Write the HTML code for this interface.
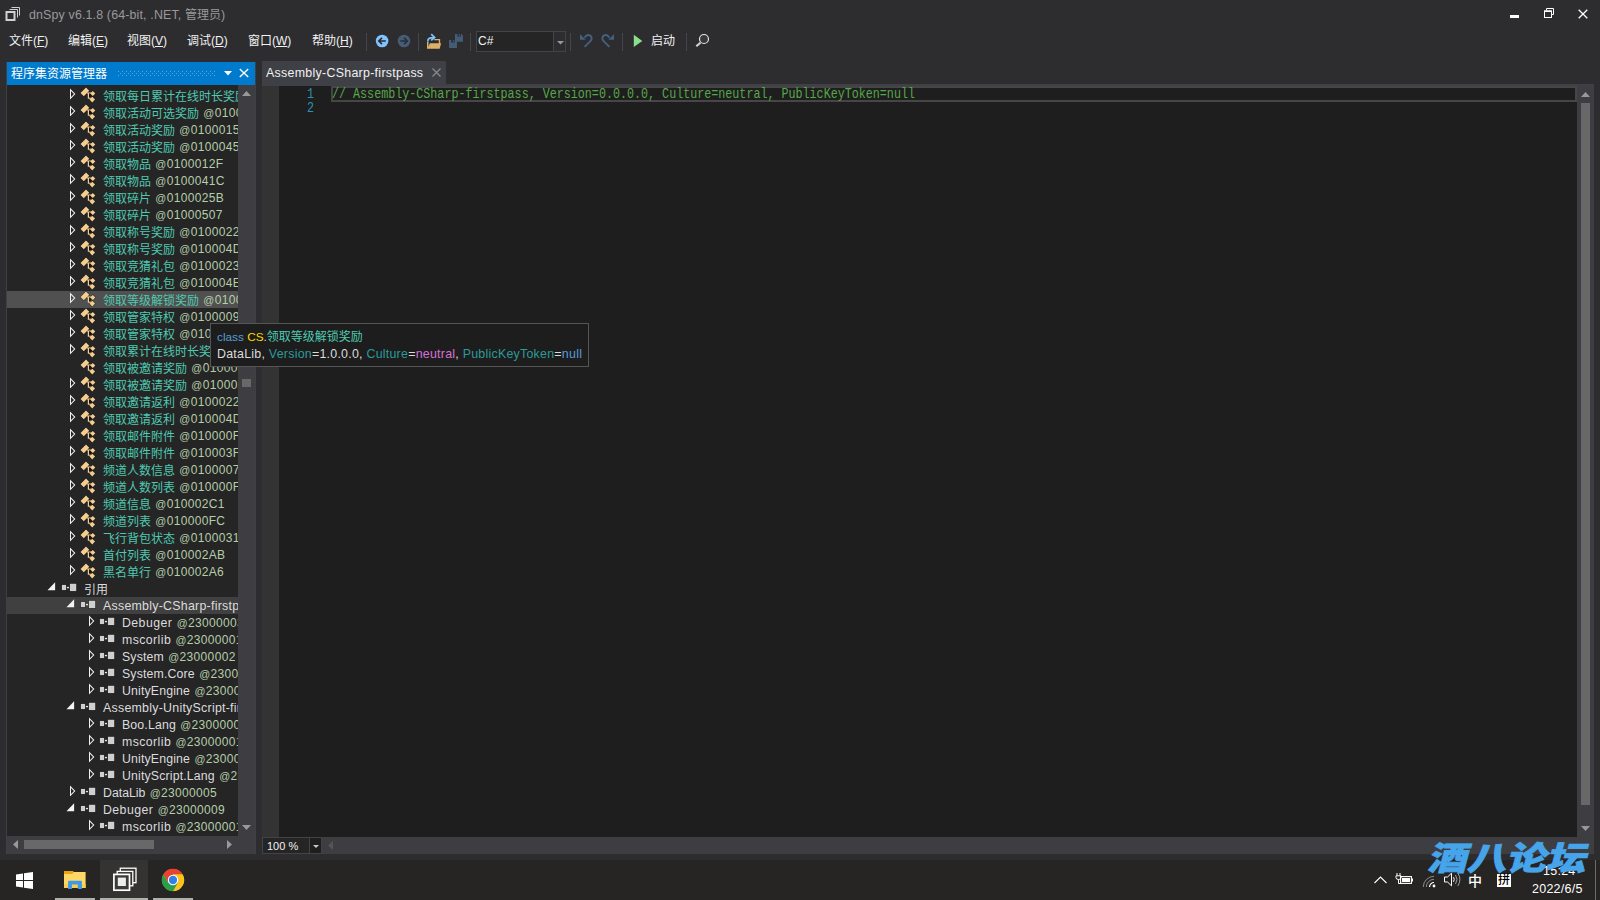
<!DOCTYPE html>
<html lang="zh-CN">
<head>
<meta charset="utf-8">
<title>dnSpy v6.1.8 (64-bit, .NET, 管理员)</title>
<style>
*{box-sizing:border-box;margin:0;padding:0}
html,body{width:1600px;height:900px;overflow:hidden;background:#2d2d30}
body{position:relative;font-family:"Liberation Sans","Noto Sans CJK SC",sans-serif;font-size:12px;color:#f1f1f1;-webkit-font-smoothing:antialiased}
.abs{position:absolute}
svg{position:absolute;overflow:visible}
/* title */
#title{position:absolute;left:29px;top:7px;height:16px;line-height:16px;color:#999;font-size:12px;white-space:nowrap}
/* menu */
.menu{position:absolute;top:33px;height:16px;line-height:16px;white-space:nowrap;color:#f1f1f1}
.menu u{text-decoration:underline;text-underline-offset:1px}
.sep{position:absolute;top:33px;width:1px;height:18px;background:#46464a}
/* panel */
#panel{position:absolute;left:6px;top:62px;width:250px;height:792px;background:#252526;border:1px solid #3f3f46;border-top:none}
#phead{position:absolute;left:7px;top:62px;width:248px;height:23px;background:#007acc}
#phead .t{position:absolute;left:4px;top:4px;line-height:16px;color:#fff;white-space:nowrap}
#tree{position:absolute;left:7px;top:86px;width:231px;height:750px;overflow:hidden;background:#252526}
.row{position:absolute;left:0;width:231px;height:17px;white-space:nowrap}
.row.sel{background:#404040}.row.hot{background:#505050}
.row .ex{top:2px}
.row .ic{top:0}
.lbl{position:absolute;top:1px;height:17px;line-height:17px;white-space:nowrap}
.l{font-size:12.4px;letter-spacing:.25px}.c{font-size:12px;letter-spacing:0}
.ty{color:#4ec9b0;position:relative;top:1px}.cj{position:relative;top:1px}.tx{color:#dcdcdc}.tk{color:#b5cea8;margin-left:1px;letter-spacing:.33px}.at{font-size:10.8px}.n{font-size:12.3px;letter-spacing:.16px}
.sb{background:#3e3e42;position:absolute}
.th{background:#686868;position:absolute}
/* tab */
#tab{position:absolute;left:262px;top:61px;width:184px;height:23px;background:#3f3f46}
#tab .t{position:absolute;left:4px;top:4px;line-height:16px;color:#f1f1f1;white-space:nowrap}
#tabline{position:absolute;left:262px;top:84px;width:1332px;height:2px;background:#3f3f46}
#editor{position:absolute;left:262px;top:86px;width:1315px;height:751px;background:#1e1e1e}
#gutter{position:absolute;left:262px;top:86px;width:17px;height:751px;background:#333334}
.code{font-family:"Liberation Mono",monospace;font-size:14px;white-space:pre;position:absolute;transform-origin:0 0;transform:scaleX(.836)}
#curline{position:absolute;left:331px;top:86px;width:1246px;height:16px;border:2px solid #464646}
/* bottom */
#ebottom{position:absolute;left:262px;top:837px;width:1332px;height:17px;background:#3e3e42}
#zoom{position:absolute;left:262px;top:837px;width:60px;height:17px;border:1px solid #434346;background:#252526}
/* tooltip */
#tip{position:absolute;left:210px;top:323px;width:379px;height:44px;background:#1d1d1d;border:1px solid #555}
#tip div{position:absolute;left:6px;white-space:nowrap;line-height:17px;height:17px;color:#dcdcdc}
/* taskbar */
#taskbar{position:absolute;left:0;top:860px;width:1600px;height:40px;background:#262524}
.ul{position:absolute;top:38px;height:2px;background:#b0b0ac}
#wm{position:absolute;left:1425px;top:834px;white-space:nowrap;font-family:"Liberation Sans","Noto Sans CJK SC",sans-serif;font-weight:900;font-size:38px;line-height:44px;color:#46a5ea;-webkit-text-stroke:0.9px #46a5ea;transform-origin:0 100%;transform:skewX(-15deg) scale(1.04,0.86);letter-spacing:0}
.tray{position:absolute;color:#fff;white-space:nowrap}
</style>
</head>
<body>


<!-- title bar -->
<svg style="left:5px;top:7px" width="15" height="14" viewBox="0 0 15 14"><path d="M4.5 2.5 H12.5 V10.5 M6.5 0.5 H14.5 V8.5" fill="none" stroke="#d0d0d0" stroke-width="1"/><rect x="1.5" y="5" width="8" height="8" fill="none" stroke="#d0d0d0" stroke-width="2"/></svg>
<div id="title"><span class="l" style="letter-spacing:.16px">dnSpy v6.1.8 (64-bit, .NET, </span>管理员<span class="l">)</span></div>
<svg style="left:1510px;top:15px" width="9" height="3"><rect width="9" height="3" fill="#fff"/></svg>
<svg style="left:1544px;top:8px" width="10" height="10" viewBox="0 0 10 10"><path d="M2.5 2.5 V0.5 H9.5 V6.5 H7.5" fill="none" stroke="#fff" stroke-width="1"/><rect x="0.5" y="3" width="7" height="6.5" fill="none" stroke="#fff" stroke-width="1"/><rect x="0" y="2.5" width="8" height="1.5" fill="#fff"/></svg>
<svg style="left:1578px;top:9px" width="10" height="10" viewBox="0 0 10 10"><path d="M0.7 0.7 L9.3 9.3 M9.3 0.7 L0.7 9.3" stroke="#fff" stroke-width="1.3" fill="none"/></svg>

<!-- menu -->
<div class="menu" style="left:9px">文件(<u>F</u>)</div>
<div class="menu" style="left:68px">编辑(<u>E</u>)</div>
<div class="menu" style="left:127px">视图(<u>V</u>)</div>
<div class="menu" style="left:187px">调试(<u>D</u>)</div>
<div class="menu" style="left:248px">窗口(<u>W</u>)</div>
<div class="menu" style="left:312px">帮助(<u>H</u>)</div>
<div class="sep" style="left:366px"></div>
<!-- toolbar icons (absolute coords) -->
<svg style="left:0;top:0" width="720" height="56" viewBox="0 0 720 56">
<!-- back -->
<circle cx="382.1" cy="41" r="6.3" fill="#7fc3ff"/>
<path d="M385.8 41 H380 M382 37.9 L378.8 41 L382 44.1" stroke="#2b2b30" stroke-width="1.6" fill="none"/>
<!-- forward -->
<circle cx="404" cy="41" r="6.3" fill="#455c76"/>
<path d="M400.3 41 H406.1 M404.1 37.9 L407.3 41 L404.1 44.1" stroke="#2d2d30" stroke-width="1.6" fill="none"/>
<!-- open -->
<path d="M427 42 H428.5 V47 L429.8 43.2 H438.8 V40.3 H434.3 V39 H440.15 V43.2 H441.1 L439.7 48.7 H427 Z" fill="#dbb068"/>
<path d="M427.9 41.6 C427.6 38.6 429 37.6 434.2 37.6" stroke="#7fc3ff" stroke-width="1.7" fill="none"/>
<path d="M431.2 34.2 L434.6 37.4 L431.2 40.4" stroke="#7fc3ff" stroke-width="1.7" fill="none"/>
<!-- save all -->
<path d="M455 34.05 H461.6 L462.95 35.4 V41.7 H455 Z M457.4 34.05 V36.45 H461 V34.05 Z" fill="#455c76" fill-rule="evenodd"/>
<rect x="458.75" y="34.05" width="1.35" height="1.65" fill="#455c76"/>
<path d="M449 40.05 H456.95 V48 H449 Z M451.25 40.05 V42.45 H454.85 V40.05 Z" fill="#455c76" fill-rule="evenodd"/>
<rect x="453.05" y="40.05" width="1.1" height="1.65" fill="#455c76"/>
<!-- undo -->
<path d="M584.6 46.9 L590.6 40.9 A3.4 3.4 0 1 0 584.9 37.8" stroke="#45607f" stroke-width="2" fill="none"/>
<path d="M580 34.2 V39.8 H585.8 Z" fill="#45607f"/>
<!-- redo -->
<path d="M609.4 46.9 L603.4 40.9 A3.4 3.4 0 1 1 609.1 37.8" stroke="#45607f" stroke-width="2" fill="none"/>
<path d="M614 34.2 V39.8 H608.2 Z" fill="#45607f"/>
<!-- start -->
<path d="M633.8 34.8 L642.3 40.95 L633.8 47.1 Z" fill="#88e08a"/>
<!-- search -->
<circle cx="704" cy="39" r="4.5" fill="#38383c" stroke="#e4e4e4" stroke-width="1.2"/>
<path d="M700.4 42.7 L696.3 46.2" stroke="#d4d4d4" stroke-width="2.1"/>
</svg>
<div class="sep" style="left:418px"></div>
<div class="sep" style="left:470px"></div>
<!-- combobox -->
<div class="abs" style="left:476px;top:31px;width:90px;height:21px;border:1px solid #434346;background:#252526"></div>
<div class="abs" style="left:553px;top:32px;width:12px;height:19px;background:#2d2d30;border-left:1px solid #434346"></div>
<div class="abs" style="left:478px;top:33px;line-height:16px">C#</div>
<svg style="left:557px;top:41px" width="7" height="4" viewBox="0 0 7 4"><path d="M0 0 H7 L3.5 3.5 Z" fill="#999"/></svg>
<div class="sep" style="left:570px"></div>
<div class="sep" style="left:622px"></div>
<div class="menu" style="left:651px">启动</div>
<div class="sep" style="left:686px"></div>

<!-- left panel -->
<div id="panel"></div>
<div id="phead"><span class="t">程序集资源管理器</span>
<svg style="left:111px;top:9px" width="98" height="5"><path d="M0 .5H98M0 4.5H98" stroke="#59a8de" stroke-width="1" stroke-dasharray="1 3"/><path d="M2 2.5H98" stroke="#59a8de" stroke-width="1" stroke-dasharray="1 3"/></svg>
<svg style="left:217px;top:9px" width="8" height="5" viewBox="0 0 8 5"><path d="M0 0 H8 L4 4.5 Z" fill="#fff"/></svg>
<svg style="left:232px;top:6px" width="10" height="10" viewBox="0 0 10 10"><path d="M0.8 1 L9.2 9 M9.2 1 L0.8 9" stroke="#fff" stroke-width="1.4" fill="none"/></svg>
</div>
<div id="tree">
<div class="row" style="top:1px"><svg class="ex" style="left:62px;top:0" width="8" height="14" viewBox="0 0 8 14"><path d="M1 1.6 L1 12.4 L6.4 7 Z M2 4 L2 10 L5 7 Z" fill="#f1f1f1" fill-rule="evenodd"/></svg><svg class="ic" style="left:73px" width="17" height="17" viewBox="0 0 17 17"><path d="M6 -0.2 L-0.2 6 L3.75 9.95 L9.95 3.75 Z M12.75 3.2 L16.05 6.5 L12.75 9.8 L9.45 6.5 Z M12.25 9.2 L15.65 12.6 L12.25 16 L8.85 12.6 Z" fill="#111" opacity=".55"/><path d="M6 0.5 L0.5 6 L3.75 9.25 L9.25 3.75 Z" fill="#f5cd90"/><path d="M12.75 3.9 L15.35 6.5 L12.75 9.1 L10.15 6.5 Z" fill="#f5cd90"/><path d="M12.25 9.8 L15.05 12.6 L12.25 15.4 L9.45 12.6 Z" fill="#f5cd90"/><path d="M7 5.4 H11.5 V6.6 H9 V10.6 H10.8 V11.8 H7.8 V6.6 H7 Z" fill="#f5cd90"/><path d="M9 6.6 H10.1 L11.4 8.2 L10.7 10.6 H9 Z" fill="#0c0c0c" opacity=".7"/></svg><span class="lbl" style="left:96px"><span class="ty">领取每日累计在线时长奖励</span> <span class="tk"><span class="at">@</span>010002E0</span></span></div>
<div class="row" style="top:18px"><svg class="ex" style="left:62px;top:0" width="8" height="14" viewBox="0 0 8 14"><path d="M1 1.6 L1 12.4 L6.4 7 Z M2 4 L2 10 L5 7 Z" fill="#f1f1f1" fill-rule="evenodd"/></svg><svg class="ic" style="left:73px" width="17" height="17" viewBox="0 0 17 17"><path d="M6 -0.2 L-0.2 6 L3.75 9.95 L9.95 3.75 Z M12.75 3.2 L16.05 6.5 L12.75 9.8 L9.45 6.5 Z M12.25 9.2 L15.65 12.6 L12.25 16 L8.85 12.6 Z" fill="#111" opacity=".55"/><path d="M6 0.5 L0.5 6 L3.75 9.25 L9.25 3.75 Z" fill="#f5cd90"/><path d="M12.75 3.9 L15.35 6.5 L12.75 9.1 L10.15 6.5 Z" fill="#f5cd90"/><path d="M12.25 9.8 L15.05 12.6 L12.25 15.4 L9.45 12.6 Z" fill="#f5cd90"/><path d="M7 5.4 H11.5 V6.6 H9 V10.6 H10.8 V11.8 H7.8 V6.6 H7 Z" fill="#f5cd90"/><path d="M9 6.6 H10.1 L11.4 8.2 L10.7 10.6 H9 Z" fill="#0c0c0c" opacity=".7"/></svg><span class="lbl" style="left:96px"><span class="ty">领取活动可选奖励</span> <span class="tk"><span class="at">@</span>01000459</span></span></div>
<div class="row" style="top:35px"><svg class="ex" style="left:62px;top:0" width="8" height="14" viewBox="0 0 8 14"><path d="M1 1.6 L1 12.4 L6.4 7 Z M2 4 L2 10 L5 7 Z" fill="#f1f1f1" fill-rule="evenodd"/></svg><svg class="ic" style="left:73px" width="17" height="17" viewBox="0 0 17 17"><path d="M6 -0.2 L-0.2 6 L3.75 9.95 L9.95 3.75 Z M12.75 3.2 L16.05 6.5 L12.75 9.8 L9.45 6.5 Z M12.25 9.2 L15.65 12.6 L12.25 16 L8.85 12.6 Z" fill="#111" opacity=".55"/><path d="M6 0.5 L0.5 6 L3.75 9.25 L9.25 3.75 Z" fill="#f5cd90"/><path d="M12.75 3.9 L15.35 6.5 L12.75 9.1 L10.15 6.5 Z" fill="#f5cd90"/><path d="M12.25 9.8 L15.05 12.6 L12.25 15.4 L9.45 12.6 Z" fill="#f5cd90"/><path d="M7 5.4 H11.5 V6.6 H9 V10.6 H10.8 V11.8 H7.8 V6.6 H7 Z" fill="#f5cd90"/><path d="M9 6.6 H10.1 L11.4 8.2 L10.7 10.6 H9 Z" fill="#0c0c0c" opacity=".7"/></svg><span class="lbl" style="left:96px"><span class="ty">领取活动奖励</span> <span class="tk"><span class="at">@</span>01000157</span></span></div>
<div class="row" style="top:52px"><svg class="ex" style="left:62px;top:0" width="8" height="14" viewBox="0 0 8 14"><path d="M1 1.6 L1 12.4 L6.4 7 Z M2 4 L2 10 L5 7 Z" fill="#f1f1f1" fill-rule="evenodd"/></svg><svg class="ic" style="left:73px" width="17" height="17" viewBox="0 0 17 17"><path d="M6 -0.2 L-0.2 6 L3.75 9.95 L9.95 3.75 Z M12.75 3.2 L16.05 6.5 L12.75 9.8 L9.45 6.5 Z M12.25 9.2 L15.65 12.6 L12.25 16 L8.85 12.6 Z" fill="#111" opacity=".55"/><path d="M6 0.5 L0.5 6 L3.75 9.25 L9.25 3.75 Z" fill="#f5cd90"/><path d="M12.75 3.9 L15.35 6.5 L12.75 9.1 L10.15 6.5 Z" fill="#f5cd90"/><path d="M12.25 9.8 L15.05 12.6 L12.25 15.4 L9.45 12.6 Z" fill="#f5cd90"/><path d="M7 5.4 H11.5 V6.6 H9 V10.6 H10.8 V11.8 H7.8 V6.6 H7 Z" fill="#f5cd90"/><path d="M9 6.6 H10.1 L11.4 8.2 L10.7 10.6 H9 Z" fill="#0c0c0c" opacity=".7"/></svg><span class="lbl" style="left:96px"><span class="ty">领取活动奖励</span> <span class="tk"><span class="at">@</span>01000458</span></span></div>
<div class="row" style="top:69px"><svg class="ex" style="left:62px;top:0" width="8" height="14" viewBox="0 0 8 14"><path d="M1 1.6 L1 12.4 L6.4 7 Z M2 4 L2 10 L5 7 Z" fill="#f1f1f1" fill-rule="evenodd"/></svg><svg class="ic" style="left:73px" width="17" height="17" viewBox="0 0 17 17"><path d="M6 -0.2 L-0.2 6 L3.75 9.95 L9.95 3.75 Z M12.75 3.2 L16.05 6.5 L12.75 9.8 L9.45 6.5 Z M12.25 9.2 L15.65 12.6 L12.25 16 L8.85 12.6 Z" fill="#111" opacity=".55"/><path d="M6 0.5 L0.5 6 L3.75 9.25 L9.25 3.75 Z" fill="#f5cd90"/><path d="M12.75 3.9 L15.35 6.5 L12.75 9.1 L10.15 6.5 Z" fill="#f5cd90"/><path d="M12.25 9.8 L15.05 12.6 L12.25 15.4 L9.45 12.6 Z" fill="#f5cd90"/><path d="M7 5.4 H11.5 V6.6 H9 V10.6 H10.8 V11.8 H7.8 V6.6 H7 Z" fill="#f5cd90"/><path d="M9 6.6 H10.1 L11.4 8.2 L10.7 10.6 H9 Z" fill="#0c0c0c" opacity=".7"/></svg><span class="lbl" style="left:96px"><span class="ty">领取物品</span> <span class="tk"><span class="at">@</span>0100012F</span></span></div>
<div class="row" style="top:86px"><svg class="ex" style="left:62px;top:0" width="8" height="14" viewBox="0 0 8 14"><path d="M1 1.6 L1 12.4 L6.4 7 Z M2 4 L2 10 L5 7 Z" fill="#f1f1f1" fill-rule="evenodd"/></svg><svg class="ic" style="left:73px" width="17" height="17" viewBox="0 0 17 17"><path d="M6 -0.2 L-0.2 6 L3.75 9.95 L9.95 3.75 Z M12.75 3.2 L16.05 6.5 L12.75 9.8 L9.45 6.5 Z M12.25 9.2 L15.65 12.6 L12.25 16 L8.85 12.6 Z" fill="#111" opacity=".55"/><path d="M6 0.5 L0.5 6 L3.75 9.25 L9.25 3.75 Z" fill="#f5cd90"/><path d="M12.75 3.9 L15.35 6.5 L12.75 9.1 L10.15 6.5 Z" fill="#f5cd90"/><path d="M12.25 9.8 L15.05 12.6 L12.25 15.4 L9.45 12.6 Z" fill="#f5cd90"/><path d="M7 5.4 H11.5 V6.6 H9 V10.6 H10.8 V11.8 H7.8 V6.6 H7 Z" fill="#f5cd90"/><path d="M9 6.6 H10.1 L11.4 8.2 L10.7 10.6 H9 Z" fill="#0c0c0c" opacity=".7"/></svg><span class="lbl" style="left:96px"><span class="ty">领取物品</span> <span class="tk"><span class="at">@</span>0100041C</span></span></div>
<div class="row" style="top:103px"><svg class="ex" style="left:62px;top:0" width="8" height="14" viewBox="0 0 8 14"><path d="M1 1.6 L1 12.4 L6.4 7 Z M2 4 L2 10 L5 7 Z" fill="#f1f1f1" fill-rule="evenodd"/></svg><svg class="ic" style="left:73px" width="17" height="17" viewBox="0 0 17 17"><path d="M6 -0.2 L-0.2 6 L3.75 9.95 L9.95 3.75 Z M12.75 3.2 L16.05 6.5 L12.75 9.8 L9.45 6.5 Z M12.25 9.2 L15.65 12.6 L12.25 16 L8.85 12.6 Z" fill="#111" opacity=".55"/><path d="M6 0.5 L0.5 6 L3.75 9.25 L9.25 3.75 Z" fill="#f5cd90"/><path d="M12.75 3.9 L15.35 6.5 L12.75 9.1 L10.15 6.5 Z" fill="#f5cd90"/><path d="M12.25 9.8 L15.05 12.6 L12.25 15.4 L9.45 12.6 Z" fill="#f5cd90"/><path d="M7 5.4 H11.5 V6.6 H9 V10.6 H10.8 V11.8 H7.8 V6.6 H7 Z" fill="#f5cd90"/><path d="M9 6.6 H10.1 L11.4 8.2 L10.7 10.6 H9 Z" fill="#0c0c0c" opacity=".7"/></svg><span class="lbl" style="left:96px"><span class="ty">领取碎片</span> <span class="tk"><span class="at">@</span>0100025B</span></span></div>
<div class="row" style="top:120px"><svg class="ex" style="left:62px;top:0" width="8" height="14" viewBox="0 0 8 14"><path d="M1 1.6 L1 12.4 L6.4 7 Z M2 4 L2 10 L5 7 Z" fill="#f1f1f1" fill-rule="evenodd"/></svg><svg class="ic" style="left:73px" width="17" height="17" viewBox="0 0 17 17"><path d="M6 -0.2 L-0.2 6 L3.75 9.95 L9.95 3.75 Z M12.75 3.2 L16.05 6.5 L12.75 9.8 L9.45 6.5 Z M12.25 9.2 L15.65 12.6 L12.25 16 L8.85 12.6 Z" fill="#111" opacity=".55"/><path d="M6 0.5 L0.5 6 L3.75 9.25 L9.25 3.75 Z" fill="#f5cd90"/><path d="M12.75 3.9 L15.35 6.5 L12.75 9.1 L10.15 6.5 Z" fill="#f5cd90"/><path d="M12.25 9.8 L15.05 12.6 L12.25 15.4 L9.45 12.6 Z" fill="#f5cd90"/><path d="M7 5.4 H11.5 V6.6 H9 V10.6 H10.8 V11.8 H7.8 V6.6 H7 Z" fill="#f5cd90"/><path d="M9 6.6 H10.1 L11.4 8.2 L10.7 10.6 H9 Z" fill="#0c0c0c" opacity=".7"/></svg><span class="lbl" style="left:96px"><span class="ty">领取碎片</span> <span class="tk"><span class="at">@</span>01000507</span></span></div>
<div class="row" style="top:137px"><svg class="ex" style="left:62px;top:0" width="8" height="14" viewBox="0 0 8 14"><path d="M1 1.6 L1 12.4 L6.4 7 Z M2 4 L2 10 L5 7 Z" fill="#f1f1f1" fill-rule="evenodd"/></svg><svg class="ic" style="left:73px" width="17" height="17" viewBox="0 0 17 17"><path d="M6 -0.2 L-0.2 6 L3.75 9.95 L9.95 3.75 Z M12.75 3.2 L16.05 6.5 L12.75 9.8 L9.45 6.5 Z M12.25 9.2 L15.65 12.6 L12.25 16 L8.85 12.6 Z" fill="#111" opacity=".55"/><path d="M6 0.5 L0.5 6 L3.75 9.25 L9.25 3.75 Z" fill="#f5cd90"/><path d="M12.75 3.9 L15.35 6.5 L12.75 9.1 L10.15 6.5 Z" fill="#f5cd90"/><path d="M12.25 9.8 L15.05 12.6 L12.25 15.4 L9.45 12.6 Z" fill="#f5cd90"/><path d="M7 5.4 H11.5 V6.6 H9 V10.6 H10.8 V11.8 H7.8 V6.6 H7 Z" fill="#f5cd90"/><path d="M9 6.6 H10.1 L11.4 8.2 L10.7 10.6 H9 Z" fill="#0c0c0c" opacity=".7"/></svg><span class="lbl" style="left:96px"><span class="ty">领取称号奖励</span> <span class="tk"><span class="at">@</span>01000228</span></span></div>
<div class="row" style="top:154px"><svg class="ex" style="left:62px;top:0" width="8" height="14" viewBox="0 0 8 14"><path d="M1 1.6 L1 12.4 L6.4 7 Z M2 4 L2 10 L5 7 Z" fill="#f1f1f1" fill-rule="evenodd"/></svg><svg class="ic" style="left:73px" width="17" height="17" viewBox="0 0 17 17"><path d="M6 -0.2 L-0.2 6 L3.75 9.95 L9.95 3.75 Z M12.75 3.2 L16.05 6.5 L12.75 9.8 L9.45 6.5 Z M12.25 9.2 L15.65 12.6 L12.25 16 L8.85 12.6 Z" fill="#111" opacity=".55"/><path d="M6 0.5 L0.5 6 L3.75 9.25 L9.25 3.75 Z" fill="#f5cd90"/><path d="M12.75 3.9 L15.35 6.5 L12.75 9.1 L10.15 6.5 Z" fill="#f5cd90"/><path d="M12.25 9.8 L15.05 12.6 L12.25 15.4 L9.45 12.6 Z" fill="#f5cd90"/><path d="M7 5.4 H11.5 V6.6 H9 V10.6 H10.8 V11.8 H7.8 V6.6 H7 Z" fill="#f5cd90"/><path d="M9 6.6 H10.1 L11.4 8.2 L10.7 10.6 H9 Z" fill="#0c0c0c" opacity=".7"/></svg><span class="lbl" style="left:96px"><span class="ty">领取称号奖励</span> <span class="tk"><span class="at">@</span>010004D2</span></span></div>
<div class="row" style="top:171px"><svg class="ex" style="left:62px;top:0" width="8" height="14" viewBox="0 0 8 14"><path d="M1 1.6 L1 12.4 L6.4 7 Z M2 4 L2 10 L5 7 Z" fill="#f1f1f1" fill-rule="evenodd"/></svg><svg class="ic" style="left:73px" width="17" height="17" viewBox="0 0 17 17"><path d="M6 -0.2 L-0.2 6 L3.75 9.95 L9.95 3.75 Z M12.75 3.2 L16.05 6.5 L12.75 9.8 L9.45 6.5 Z M12.25 9.2 L15.65 12.6 L12.25 16 L8.85 12.6 Z" fill="#111" opacity=".55"/><path d="M6 0.5 L0.5 6 L3.75 9.25 L9.25 3.75 Z" fill="#f5cd90"/><path d="M12.75 3.9 L15.35 6.5 L12.75 9.1 L10.15 6.5 Z" fill="#f5cd90"/><path d="M12.25 9.8 L15.05 12.6 L12.25 15.4 L9.45 12.6 Z" fill="#f5cd90"/><path d="M7 5.4 H11.5 V6.6 H9 V10.6 H10.8 V11.8 H7.8 V6.6 H7 Z" fill="#f5cd90"/><path d="M9 6.6 H10.1 L11.4 8.2 L10.7 10.6 H9 Z" fill="#0c0c0c" opacity=".7"/></svg><span class="lbl" style="left:96px"><span class="ty">领取竞猜礼包</span> <span class="tk"><span class="at">@</span>01000235</span></span></div>
<div class="row" style="top:188px"><svg class="ex" style="left:62px;top:0" width="8" height="14" viewBox="0 0 8 14"><path d="M1 1.6 L1 12.4 L6.4 7 Z M2 4 L2 10 L5 7 Z" fill="#f1f1f1" fill-rule="evenodd"/></svg><svg class="ic" style="left:73px" width="17" height="17" viewBox="0 0 17 17"><path d="M6 -0.2 L-0.2 6 L3.75 9.95 L9.95 3.75 Z M12.75 3.2 L16.05 6.5 L12.75 9.8 L9.45 6.5 Z M12.25 9.2 L15.65 12.6 L12.25 16 L8.85 12.6 Z" fill="#111" opacity=".55"/><path d="M6 0.5 L0.5 6 L3.75 9.25 L9.25 3.75 Z" fill="#f5cd90"/><path d="M12.75 3.9 L15.35 6.5 L12.75 9.1 L10.15 6.5 Z" fill="#f5cd90"/><path d="M12.25 9.8 L15.05 12.6 L12.25 15.4 L9.45 12.6 Z" fill="#f5cd90"/><path d="M7 5.4 H11.5 V6.6 H9 V10.6 H10.8 V11.8 H7.8 V6.6 H7 Z" fill="#f5cd90"/><path d="M9 6.6 H10.1 L11.4 8.2 L10.7 10.6 H9 Z" fill="#0c0c0c" opacity=".7"/></svg><span class="lbl" style="left:96px"><span class="ty">领取竞猜礼包</span> <span class="tk"><span class="at">@</span>010004E1</span></span></div>
<div class="row hot" style="top:205px"><svg class="ex" style="left:62px;top:0" width="8" height="14" viewBox="0 0 8 14"><path d="M1 1.6 L1 12.4 L6.4 7 Z M2 4 L2 10 L5 7 Z" fill="#f1f1f1" fill-rule="evenodd"/></svg><svg class="ic" style="left:73px" width="17" height="17" viewBox="0 0 17 17"><path d="M6 -0.2 L-0.2 6 L3.75 9.95 L9.95 3.75 Z M12.75 3.2 L16.05 6.5 L12.75 9.8 L9.45 6.5 Z M12.25 9.2 L15.65 12.6 L12.25 16 L8.85 12.6 Z" fill="#111" opacity=".55"/><path d="M6 0.5 L0.5 6 L3.75 9.25 L9.25 3.75 Z" fill="#f5cd90"/><path d="M12.75 3.9 L15.35 6.5 L12.75 9.1 L10.15 6.5 Z" fill="#f5cd90"/><path d="M12.25 9.8 L15.05 12.6 L12.25 15.4 L9.45 12.6 Z" fill="#f5cd90"/><path d="M7 5.4 H11.5 V6.6 H9 V10.6 H10.8 V11.8 H7.8 V6.6 H7 Z" fill="#f5cd90"/><path d="M9 6.6 H10.1 L11.4 8.2 L10.7 10.6 H9 Z" fill="#0c0c0c" opacity=".7"/></svg><span class="lbl" style="left:96px"><span class="ty">领取等级解锁奖励</span> <span class="tk"><span class="at">@</span>010001B4</span></span></div>
<div class="row" style="top:222px"><svg class="ex" style="left:62px;top:0" width="8" height="14" viewBox="0 0 8 14"><path d="M1 1.6 L1 12.4 L6.4 7 Z M2 4 L2 10 L5 7 Z" fill="#f1f1f1" fill-rule="evenodd"/></svg><svg class="ic" style="left:73px" width="17" height="17" viewBox="0 0 17 17"><path d="M6 -0.2 L-0.2 6 L3.75 9.95 L9.95 3.75 Z M12.75 3.2 L16.05 6.5 L12.75 9.8 L9.45 6.5 Z M12.25 9.2 L15.65 12.6 L12.25 16 L8.85 12.6 Z" fill="#111" opacity=".55"/><path d="M6 0.5 L0.5 6 L3.75 9.25 L9.25 3.75 Z" fill="#f5cd90"/><path d="M12.75 3.9 L15.35 6.5 L12.75 9.1 L10.15 6.5 Z" fill="#f5cd90"/><path d="M12.25 9.8 L15.05 12.6 L12.25 15.4 L9.45 12.6 Z" fill="#f5cd90"/><path d="M7 5.4 H11.5 V6.6 H9 V10.6 H10.8 V11.8 H7.8 V6.6 H7 Z" fill="#f5cd90"/><path d="M9 6.6 H10.1 L11.4 8.2 L10.7 10.6 H9 Z" fill="#0c0c0c" opacity=".7"/></svg><span class="lbl" style="left:96px"><span class="ty">领取管家特权</span> <span class="tk"><span class="at">@</span>01000096</span></span></div>
<div class="row" style="top:239px"><svg class="ex" style="left:62px;top:0" width="8" height="14" viewBox="0 0 8 14"><path d="M1 1.6 L1 12.4 L6.4 7 Z M2 4 L2 10 L5 7 Z" fill="#f1f1f1" fill-rule="evenodd"/></svg><svg class="ic" style="left:73px" width="17" height="17" viewBox="0 0 17 17"><path d="M6 -0.2 L-0.2 6 L3.75 9.95 L9.95 3.75 Z M12.75 3.2 L16.05 6.5 L12.75 9.8 L9.45 6.5 Z M12.25 9.2 L15.65 12.6 L12.25 16 L8.85 12.6 Z" fill="#111" opacity=".55"/><path d="M6 0.5 L0.5 6 L3.75 9.25 L9.25 3.75 Z" fill="#f5cd90"/><path d="M12.75 3.9 L15.35 6.5 L12.75 9.1 L10.15 6.5 Z" fill="#f5cd90"/><path d="M12.25 9.8 L15.05 12.6 L12.25 15.4 L9.45 12.6 Z" fill="#f5cd90"/><path d="M7 5.4 H11.5 V6.6 H9 V10.6 H10.8 V11.8 H7.8 V6.6 H7 Z" fill="#f5cd90"/><path d="M9 6.6 H10.1 L11.4 8.2 L10.7 10.6 H9 Z" fill="#0c0c0c" opacity=".7"/></svg><span class="lbl" style="left:96px"><span class="ty">领取管家特权</span> <span class="tk"><span class="at">@</span>010003D7</span></span></div>
<div class="row" style="top:256px"><svg class="ex" style="left:62px;top:0" width="8" height="14" viewBox="0 0 8 14"><path d="M1 1.6 L1 12.4 L6.4 7 Z M2 4 L2 10 L5 7 Z" fill="#f1f1f1" fill-rule="evenodd"/></svg><svg class="ic" style="left:73px" width="17" height="17" viewBox="0 0 17 17"><path d="M6 -0.2 L-0.2 6 L3.75 9.95 L9.95 3.75 Z M12.75 3.2 L16.05 6.5 L12.75 9.8 L9.45 6.5 Z M12.25 9.2 L15.65 12.6 L12.25 16 L8.85 12.6 Z" fill="#111" opacity=".55"/><path d="M6 0.5 L0.5 6 L3.75 9.25 L9.25 3.75 Z" fill="#f5cd90"/><path d="M12.75 3.9 L15.35 6.5 L12.75 9.1 L10.15 6.5 Z" fill="#f5cd90"/><path d="M12.25 9.8 L15.05 12.6 L12.25 15.4 L9.45 12.6 Z" fill="#f5cd90"/><path d="M7 5.4 H11.5 V6.6 H9 V10.6 H10.8 V11.8 H7.8 V6.6 H7 Z" fill="#f5cd90"/><path d="M9 6.6 H10.1 L11.4 8.2 L10.7 10.6 H9 Z" fill="#0c0c0c" opacity=".7"/></svg><span class="lbl" style="left:96px"><span class="ty">领取累计在线时长奖励</span> <span class="tk"><span class="at">@</span>010002E1</span></span></div>
<div class="row" style="top:273px"><svg class="ic" style="left:73px" width="17" height="17" viewBox="0 0 17 17"><path d="M6 -0.2 L-0.2 6 L3.75 9.95 L9.95 3.75 Z M12.75 3.2 L16.05 6.5 L12.75 9.8 L9.45 6.5 Z M12.25 9.2 L15.65 12.6 L12.25 16 L8.85 12.6 Z" fill="#111" opacity=".55"/><path d="M6 0.5 L0.5 6 L3.75 9.25 L9.25 3.75 Z" fill="#f5cd90"/><path d="M12.75 3.9 L15.35 6.5 L12.75 9.1 L10.15 6.5 Z" fill="#f5cd90"/><path d="M12.25 9.8 L15.05 12.6 L12.25 15.4 L9.45 12.6 Z" fill="#f5cd90"/><path d="M7 5.4 H11.5 V6.6 H9 V10.6 H10.8 V11.8 H7.8 V6.6 H7 Z" fill="#f5cd90"/><path d="M9 6.6 H10.1 L11.4 8.2 L10.7 10.6 H9 Z" fill="#0c0c0c" opacity=".7"/></svg><span class="lbl" style="left:96px"><span class="ty">领取被邀请奖励</span> <span class="tk"><span class="at">@</span>01000085</span></span></div>
<div class="row" style="top:290px"><svg class="ex" style="left:62px;top:0" width="8" height="14" viewBox="0 0 8 14"><path d="M1 1.6 L1 12.4 L6.4 7 Z M2 4 L2 10 L5 7 Z" fill="#f1f1f1" fill-rule="evenodd"/></svg><svg class="ic" style="left:73px" width="17" height="17" viewBox="0 0 17 17"><path d="M6 -0.2 L-0.2 6 L3.75 9.95 L9.95 3.75 Z M12.75 3.2 L16.05 6.5 L12.75 9.8 L9.45 6.5 Z M12.25 9.2 L15.65 12.6 L12.25 16 L8.85 12.6 Z" fill="#111" opacity=".55"/><path d="M6 0.5 L0.5 6 L3.75 9.25 L9.25 3.75 Z" fill="#f5cd90"/><path d="M12.75 3.9 L15.35 6.5 L12.75 9.1 L10.15 6.5 Z" fill="#f5cd90"/><path d="M12.25 9.8 L15.05 12.6 L12.25 15.4 L9.45 12.6 Z" fill="#f5cd90"/><path d="M7 5.4 H11.5 V6.6 H9 V10.6 H10.8 V11.8 H7.8 V6.6 H7 Z" fill="#f5cd90"/><path d="M9 6.6 H10.1 L11.4 8.2 L10.7 10.6 H9 Z" fill="#0c0c0c" opacity=".7"/></svg><span class="lbl" style="left:96px"><span class="ty">领取被邀请奖励</span> <span class="tk"><span class="at">@</span>010003C6</span></span></div>
<div class="row" style="top:307px"><svg class="ex" style="left:62px;top:0" width="8" height="14" viewBox="0 0 8 14"><path d="M1 1.6 L1 12.4 L6.4 7 Z M2 4 L2 10 L5 7 Z" fill="#f1f1f1" fill-rule="evenodd"/></svg><svg class="ic" style="left:73px" width="17" height="17" viewBox="0 0 17 17"><path d="M6 -0.2 L-0.2 6 L3.75 9.95 L9.95 3.75 Z M12.75 3.2 L16.05 6.5 L12.75 9.8 L9.45 6.5 Z M12.25 9.2 L15.65 12.6 L12.25 16 L8.85 12.6 Z" fill="#111" opacity=".55"/><path d="M6 0.5 L0.5 6 L3.75 9.25 L9.25 3.75 Z" fill="#f5cd90"/><path d="M12.75 3.9 L15.35 6.5 L12.75 9.1 L10.15 6.5 Z" fill="#f5cd90"/><path d="M12.25 9.8 L15.05 12.6 L12.25 15.4 L9.45 12.6 Z" fill="#f5cd90"/><path d="M7 5.4 H11.5 V6.6 H9 V10.6 H10.8 V11.8 H7.8 V6.6 H7 Z" fill="#f5cd90"/><path d="M9 6.6 H10.1 L11.4 8.2 L10.7 10.6 H9 Z" fill="#0c0c0c" opacity=".7"/></svg><span class="lbl" style="left:96px"><span class="ty">领取邀请返利</span> <span class="tk"><span class="at">@</span>01000229</span></span></div>
<div class="row" style="top:324px"><svg class="ex" style="left:62px;top:0" width="8" height="14" viewBox="0 0 8 14"><path d="M1 1.6 L1 12.4 L6.4 7 Z M2 4 L2 10 L5 7 Z" fill="#f1f1f1" fill-rule="evenodd"/></svg><svg class="ic" style="left:73px" width="17" height="17" viewBox="0 0 17 17"><path d="M6 -0.2 L-0.2 6 L3.75 9.95 L9.95 3.75 Z M12.75 3.2 L16.05 6.5 L12.75 9.8 L9.45 6.5 Z M12.25 9.2 L15.65 12.6 L12.25 16 L8.85 12.6 Z" fill="#111" opacity=".55"/><path d="M6 0.5 L0.5 6 L3.75 9.25 L9.25 3.75 Z" fill="#f5cd90"/><path d="M12.75 3.9 L15.35 6.5 L12.75 9.1 L10.15 6.5 Z" fill="#f5cd90"/><path d="M12.25 9.8 L15.05 12.6 L12.25 15.4 L9.45 12.6 Z" fill="#f5cd90"/><path d="M7 5.4 H11.5 V6.6 H9 V10.6 H10.8 V11.8 H7.8 V6.6 H7 Z" fill="#f5cd90"/><path d="M9 6.6 H10.1 L11.4 8.2 L10.7 10.6 H9 Z" fill="#0c0c0c" opacity=".7"/></svg><span class="lbl" style="left:96px"><span class="ty">领取邀请返利</span> <span class="tk"><span class="at">@</span>010004D3</span></span></div>
<div class="row" style="top:341px"><svg class="ex" style="left:62px;top:0" width="8" height="14" viewBox="0 0 8 14"><path d="M1 1.6 L1 12.4 L6.4 7 Z M2 4 L2 10 L5 7 Z" fill="#f1f1f1" fill-rule="evenodd"/></svg><svg class="ic" style="left:73px" width="17" height="17" viewBox="0 0 17 17"><path d="M6 -0.2 L-0.2 6 L3.75 9.95 L9.95 3.75 Z M12.75 3.2 L16.05 6.5 L12.75 9.8 L9.45 6.5 Z M12.25 9.2 L15.65 12.6 L12.25 16 L8.85 12.6 Z" fill="#111" opacity=".55"/><path d="M6 0.5 L0.5 6 L3.75 9.25 L9.25 3.75 Z" fill="#f5cd90"/><path d="M12.75 3.9 L15.35 6.5 L12.75 9.1 L10.15 6.5 Z" fill="#f5cd90"/><path d="M12.25 9.8 L15.05 12.6 L12.25 15.4 L9.45 12.6 Z" fill="#f5cd90"/><path d="M7 5.4 H11.5 V6.6 H9 V10.6 H10.8 V11.8 H7.8 V6.6 H7 Z" fill="#f5cd90"/><path d="M9 6.6 H10.1 L11.4 8.2 L10.7 10.6 H9 Z" fill="#0c0c0c" opacity=".7"/></svg><span class="lbl" style="left:96px"><span class="ty">领取邮件附件</span> <span class="tk"><span class="at">@</span>010000F3</span></span></div>
<div class="row" style="top:358px"><svg class="ex" style="left:62px;top:0" width="8" height="14" viewBox="0 0 8 14"><path d="M1 1.6 L1 12.4 L6.4 7 Z M2 4 L2 10 L5 7 Z" fill="#f1f1f1" fill-rule="evenodd"/></svg><svg class="ic" style="left:73px" width="17" height="17" viewBox="0 0 17 17"><path d="M6 -0.2 L-0.2 6 L3.75 9.95 L9.95 3.75 Z M12.75 3.2 L16.05 6.5 L12.75 9.8 L9.45 6.5 Z M12.25 9.2 L15.65 12.6 L12.25 16 L8.85 12.6 Z" fill="#111" opacity=".55"/><path d="M6 0.5 L0.5 6 L3.75 9.25 L9.25 3.75 Z" fill="#f5cd90"/><path d="M12.75 3.9 L15.35 6.5 L12.75 9.1 L10.15 6.5 Z" fill="#f5cd90"/><path d="M12.25 9.8 L15.05 12.6 L12.25 15.4 L9.45 12.6 Z" fill="#f5cd90"/><path d="M7 5.4 H11.5 V6.6 H9 V10.6 H10.8 V11.8 H7.8 V6.6 H7 Z" fill="#f5cd90"/><path d="M9 6.6 H10.1 L11.4 8.2 L10.7 10.6 H9 Z" fill="#0c0c0c" opacity=".7"/></svg><span class="lbl" style="left:96px"><span class="ty">领取邮件附件</span> <span class="tk"><span class="at">@</span>010003F9</span></span></div>
<div class="row" style="top:375px"><svg class="ex" style="left:62px;top:0" width="8" height="14" viewBox="0 0 8 14"><path d="M1 1.6 L1 12.4 L6.4 7 Z M2 4 L2 10 L5 7 Z" fill="#f1f1f1" fill-rule="evenodd"/></svg><svg class="ic" style="left:73px" width="17" height="17" viewBox="0 0 17 17"><path d="M6 -0.2 L-0.2 6 L3.75 9.95 L9.95 3.75 Z M12.75 3.2 L16.05 6.5 L12.75 9.8 L9.45 6.5 Z M12.25 9.2 L15.65 12.6 L12.25 16 L8.85 12.6 Z" fill="#111" opacity=".55"/><path d="M6 0.5 L0.5 6 L3.75 9.25 L9.25 3.75 Z" fill="#f5cd90"/><path d="M12.75 3.9 L15.35 6.5 L12.75 9.1 L10.15 6.5 Z" fill="#f5cd90"/><path d="M12.25 9.8 L15.05 12.6 L12.25 15.4 L9.45 12.6 Z" fill="#f5cd90"/><path d="M7 5.4 H11.5 V6.6 H9 V10.6 H10.8 V11.8 H7.8 V6.6 H7 Z" fill="#f5cd90"/><path d="M9 6.6 H10.1 L11.4 8.2 L10.7 10.6 H9 Z" fill="#0c0c0c" opacity=".7"/></svg><span class="lbl" style="left:96px"><span class="ty">频道人数信息</span> <span class="tk"><span class="at">@</span>01000079</span></span></div>
<div class="row" style="top:392px"><svg class="ex" style="left:62px;top:0" width="8" height="14" viewBox="0 0 8 14"><path d="M1 1.6 L1 12.4 L6.4 7 Z M2 4 L2 10 L5 7 Z" fill="#f1f1f1" fill-rule="evenodd"/></svg><svg class="ic" style="left:73px" width="17" height="17" viewBox="0 0 17 17"><path d="M6 -0.2 L-0.2 6 L3.75 9.95 L9.95 3.75 Z M12.75 3.2 L16.05 6.5 L12.75 9.8 L9.45 6.5 Z M12.25 9.2 L15.65 12.6 L12.25 16 L8.85 12.6 Z" fill="#111" opacity=".55"/><path d="M6 0.5 L0.5 6 L3.75 9.25 L9.25 3.75 Z" fill="#f5cd90"/><path d="M12.75 3.9 L15.35 6.5 L12.75 9.1 L10.15 6.5 Z" fill="#f5cd90"/><path d="M12.25 9.8 L15.05 12.6 L12.25 15.4 L9.45 12.6 Z" fill="#f5cd90"/><path d="M7 5.4 H11.5 V6.6 H9 V10.6 H10.8 V11.8 H7.8 V6.6 H7 Z" fill="#f5cd90"/><path d="M9 6.6 H10.1 L11.4 8.2 L10.7 10.6 H9 Z" fill="#0c0c0c" opacity=".7"/></svg><span class="lbl" style="left:96px"><span class="ty">频道人数列表</span> <span class="tk"><span class="at">@</span>010000FB</span></span></div>
<div class="row" style="top:409px"><svg class="ex" style="left:62px;top:0" width="8" height="14" viewBox="0 0 8 14"><path d="M1 1.6 L1 12.4 L6.4 7 Z M2 4 L2 10 L5 7 Z" fill="#f1f1f1" fill-rule="evenodd"/></svg><svg class="ic" style="left:73px" width="17" height="17" viewBox="0 0 17 17"><path d="M6 -0.2 L-0.2 6 L3.75 9.95 L9.95 3.75 Z M12.75 3.2 L16.05 6.5 L12.75 9.8 L9.45 6.5 Z M12.25 9.2 L15.65 12.6 L12.25 16 L8.85 12.6 Z" fill="#111" opacity=".55"/><path d="M6 0.5 L0.5 6 L3.75 9.25 L9.25 3.75 Z" fill="#f5cd90"/><path d="M12.75 3.9 L15.35 6.5 L12.75 9.1 L10.15 6.5 Z" fill="#f5cd90"/><path d="M12.25 9.8 L15.05 12.6 L12.25 15.4 L9.45 12.6 Z" fill="#f5cd90"/><path d="M7 5.4 H11.5 V6.6 H9 V10.6 H10.8 V11.8 H7.8 V6.6 H7 Z" fill="#f5cd90"/><path d="M9 6.6 H10.1 L11.4 8.2 L10.7 10.6 H9 Z" fill="#0c0c0c" opacity=".7"/></svg><span class="lbl" style="left:96px"><span class="ty">频道信息</span> <span class="tk"><span class="at">@</span>010002C1</span></span></div>
<div class="row" style="top:426px"><svg class="ex" style="left:62px;top:0" width="8" height="14" viewBox="0 0 8 14"><path d="M1 1.6 L1 12.4 L6.4 7 Z M2 4 L2 10 L5 7 Z" fill="#f1f1f1" fill-rule="evenodd"/></svg><svg class="ic" style="left:73px" width="17" height="17" viewBox="0 0 17 17"><path d="M6 -0.2 L-0.2 6 L3.75 9.95 L9.95 3.75 Z M12.75 3.2 L16.05 6.5 L12.75 9.8 L9.45 6.5 Z M12.25 9.2 L15.65 12.6 L12.25 16 L8.85 12.6 Z" fill="#111" opacity=".55"/><path d="M6 0.5 L0.5 6 L3.75 9.25 L9.25 3.75 Z" fill="#f5cd90"/><path d="M12.75 3.9 L15.35 6.5 L12.75 9.1 L10.15 6.5 Z" fill="#f5cd90"/><path d="M12.25 9.8 L15.05 12.6 L12.25 15.4 L9.45 12.6 Z" fill="#f5cd90"/><path d="M7 5.4 H11.5 V6.6 H9 V10.6 H10.8 V11.8 H7.8 V6.6 H7 Z" fill="#f5cd90"/><path d="M9 6.6 H10.1 L11.4 8.2 L10.7 10.6 H9 Z" fill="#0c0c0c" opacity=".7"/></svg><span class="lbl" style="left:96px"><span class="ty">频道列表</span> <span class="tk"><span class="at">@</span>010000FC</span></span></div>
<div class="row" style="top:443px"><svg class="ex" style="left:62px;top:0" width="8" height="14" viewBox="0 0 8 14"><path d="M1 1.6 L1 12.4 L6.4 7 Z M2 4 L2 10 L5 7 Z" fill="#f1f1f1" fill-rule="evenodd"/></svg><svg class="ic" style="left:73px" width="17" height="17" viewBox="0 0 17 17"><path d="M6 -0.2 L-0.2 6 L3.75 9.95 L9.95 3.75 Z M12.75 3.2 L16.05 6.5 L12.75 9.8 L9.45 6.5 Z M12.25 9.2 L15.65 12.6 L12.25 16 L8.85 12.6 Z" fill="#111" opacity=".55"/><path d="M6 0.5 L0.5 6 L3.75 9.25 L9.25 3.75 Z" fill="#f5cd90"/><path d="M12.75 3.9 L15.35 6.5 L12.75 9.1 L10.15 6.5 Z" fill="#f5cd90"/><path d="M12.25 9.8 L15.05 12.6 L12.25 15.4 L9.45 12.6 Z" fill="#f5cd90"/><path d="M7 5.4 H11.5 V6.6 H9 V10.6 H10.8 V11.8 H7.8 V6.6 H7 Z" fill="#f5cd90"/><path d="M9 6.6 H10.1 L11.4 8.2 L10.7 10.6 H9 Z" fill="#0c0c0c" opacity=".7"/></svg><span class="lbl" style="left:96px"><span class="ty">飞行背包状态</span> <span class="tk"><span class="at">@</span>01000316</span></span></div>
<div class="row" style="top:460px"><svg class="ex" style="left:62px;top:0" width="8" height="14" viewBox="0 0 8 14"><path d="M1 1.6 L1 12.4 L6.4 7 Z M2 4 L2 10 L5 7 Z" fill="#f1f1f1" fill-rule="evenodd"/></svg><svg class="ic" style="left:73px" width="17" height="17" viewBox="0 0 17 17"><path d="M6 -0.2 L-0.2 6 L3.75 9.95 L9.95 3.75 Z M12.75 3.2 L16.05 6.5 L12.75 9.8 L9.45 6.5 Z M12.25 9.2 L15.65 12.6 L12.25 16 L8.85 12.6 Z" fill="#111" opacity=".55"/><path d="M6 0.5 L0.5 6 L3.75 9.25 L9.25 3.75 Z" fill="#f5cd90"/><path d="M12.75 3.9 L15.35 6.5 L12.75 9.1 L10.15 6.5 Z" fill="#f5cd90"/><path d="M12.25 9.8 L15.05 12.6 L12.25 15.4 L9.45 12.6 Z" fill="#f5cd90"/><path d="M7 5.4 H11.5 V6.6 H9 V10.6 H10.8 V11.8 H7.8 V6.6 H7 Z" fill="#f5cd90"/><path d="M9 6.6 H10.1 L11.4 8.2 L10.7 10.6 H9 Z" fill="#0c0c0c" opacity=".7"/></svg><span class="lbl" style="left:96px"><span class="ty">首付列表</span> <span class="tk"><span class="at">@</span>010002AB</span></span></div>
<div class="row" style="top:477px"><svg class="ex" style="left:62px;top:0" width="8" height="14" viewBox="0 0 8 14"><path d="M1 1.6 L1 12.4 L6.4 7 Z M2 4 L2 10 L5 7 Z" fill="#f1f1f1" fill-rule="evenodd"/></svg><svg class="ic" style="left:73px" width="17" height="17" viewBox="0 0 17 17"><path d="M6 -0.2 L-0.2 6 L3.75 9.95 L9.95 3.75 Z M12.75 3.2 L16.05 6.5 L12.75 9.8 L9.45 6.5 Z M12.25 9.2 L15.65 12.6 L12.25 16 L8.85 12.6 Z" fill="#111" opacity=".55"/><path d="M6 0.5 L0.5 6 L3.75 9.25 L9.25 3.75 Z" fill="#f5cd90"/><path d="M12.75 3.9 L15.35 6.5 L12.75 9.1 L10.15 6.5 Z" fill="#f5cd90"/><path d="M12.25 9.8 L15.05 12.6 L12.25 15.4 L9.45 12.6 Z" fill="#f5cd90"/><path d="M7 5.4 H11.5 V6.6 H9 V10.6 H10.8 V11.8 H7.8 V6.6 H7 Z" fill="#f5cd90"/><path d="M9 6.6 H10.1 L11.4 8.2 L10.7 10.6 H9 Z" fill="#0c0c0c" opacity=".7"/></svg><span class="lbl" style="left:96px"><span class="ty">黑名单行</span> <span class="tk"><span class="at">@</span>010002A6</span></span></div>
<div class="row" style="top:494px"><svg class="ex" style="left:40px;top:0" width="9" height="12" viewBox="0 0 9 12"><path d="M8.1 2.3 L8.1 10.25 L0.5 10.25 Z" fill="#f4f4f4"/></svg><svg class="ic" style="left:54px" width="17" height="17" viewBox="0 0 17 17"><rect x="0.3" y="4.3" width="5.4" height="6.4" fill="#111" opacity=".6"/><rect x="8.3" y="3.15" width="7.55" height="8.55" fill="#111" opacity=".6"/><rect x="0.9" y="4.9" width="4.2" height="5.2" fill="#cfcfcf"/><rect x="8.9" y="3.75" width="6.35" height="7.35" fill="#cfcfcf"/><rect x="5.9" y="6.9" width="2.1" height="1.35" fill="#e4e4e4"/></svg><span class="lbl" style="left:77px"><span class="tx cj">引用</span></span></div>
<div class="row sel" style="top:511px"><svg class="ex" style="left:59px;top:0" width="9" height="12" viewBox="0 0 9 12"><path d="M8.1 2.3 L8.1 10.25 L0.5 10.25 Z" fill="#f4f4f4"/></svg><svg class="ic" style="left:73px" width="17" height="17" viewBox="0 0 17 17"><rect x="0.3" y="4.3" width="5.4" height="6.4" fill="#111" opacity=".6"/><rect x="8.3" y="3.15" width="7.55" height="8.55" fill="#111" opacity=".6"/><rect x="0.9" y="4.9" width="4.2" height="5.2" fill="#cfcfcf"/><rect x="8.9" y="3.75" width="6.35" height="7.35" fill="#cfcfcf"/><rect x="5.9" y="6.9" width="2.1" height="1.35" fill="#e4e4e4"/></svg><span class="lbl" style="left:96px"><span class="tx l">Assembly-CSharp-firstpass</span> <span class="tk"><span class="at">@</span>23000001</span></span></div>
<div class="row" style="top:528px"><svg class="ex" style="left:81px;top:0" width="8" height="14" viewBox="0 0 8 14"><path d="M1 1.6 L1 12.4 L6.4 7 Z M2 4 L2 10 L5 7 Z" fill="#f1f1f1" fill-rule="evenodd"/></svg><svg class="ic" style="left:92px" width="17" height="17" viewBox="0 0 17 17"><rect x="0.3" y="4.3" width="5.4" height="6.4" fill="#111" opacity=".6"/><rect x="8.3" y="3.15" width="7.55" height="8.55" fill="#111" opacity=".6"/><rect x="0.9" y="4.9" width="4.2" height="5.2" fill="#cfcfcf"/><rect x="8.9" y="3.75" width="6.35" height="7.35" fill="#cfcfcf"/><rect x="5.9" y="6.9" width="2.1" height="1.35" fill="#e4e4e4"/></svg><span class="lbl" style="left:115px"><span class="tx n" style="letter-spacing:.45px">Debuger</span> <span class="tk"><span class="at">@</span>23000003</span></span></div>
<div class="row" style="top:545px"><svg class="ex" style="left:81px;top:0" width="8" height="14" viewBox="0 0 8 14"><path d="M1 1.6 L1 12.4 L6.4 7 Z M2 4 L2 10 L5 7 Z" fill="#f1f1f1" fill-rule="evenodd"/></svg><svg class="ic" style="left:92px" width="17" height="17" viewBox="0 0 17 17"><rect x="0.3" y="4.3" width="5.4" height="6.4" fill="#111" opacity=".6"/><rect x="8.3" y="3.15" width="7.55" height="8.55" fill="#111" opacity=".6"/><rect x="0.9" y="4.9" width="4.2" height="5.2" fill="#cfcfcf"/><rect x="8.9" y="3.75" width="6.35" height="7.35" fill="#cfcfcf"/><rect x="5.9" y="6.9" width="2.1" height="1.35" fill="#e4e4e4"/></svg><span class="lbl" style="left:115px"><span class="tx n" style="letter-spacing:.42px">mscorlib</span> <span class="tk"><span class="at">@</span>23000001</span></span></div>
<div class="row" style="top:562px"><svg class="ex" style="left:81px;top:0" width="8" height="14" viewBox="0 0 8 14"><path d="M1 1.6 L1 12.4 L6.4 7 Z M2 4 L2 10 L5 7 Z" fill="#f1f1f1" fill-rule="evenodd"/></svg><svg class="ic" style="left:92px" width="17" height="17" viewBox="0 0 17 17"><rect x="0.3" y="4.3" width="5.4" height="6.4" fill="#111" opacity=".6"/><rect x="8.3" y="3.15" width="7.55" height="8.55" fill="#111" opacity=".6"/><rect x="0.9" y="4.9" width="4.2" height="5.2" fill="#cfcfcf"/><rect x="8.9" y="3.75" width="6.35" height="7.35" fill="#cfcfcf"/><rect x="5.9" y="6.9" width="2.1" height="1.35" fill="#e4e4e4"/></svg><span class="lbl" style="left:115px"><span class="tx n">System</span> <span class="tk"><span class="at">@</span>23000002</span></span></div>
<div class="row" style="top:579px"><svg class="ex" style="left:81px;top:0" width="8" height="14" viewBox="0 0 8 14"><path d="M1 1.6 L1 12.4 L6.4 7 Z M2 4 L2 10 L5 7 Z" fill="#f1f1f1" fill-rule="evenodd"/></svg><svg class="ic" style="left:92px" width="17" height="17" viewBox="0 0 17 17"><rect x="0.3" y="4.3" width="5.4" height="6.4" fill="#111" opacity=".6"/><rect x="8.3" y="3.15" width="7.55" height="8.55" fill="#111" opacity=".6"/><rect x="0.9" y="4.9" width="4.2" height="5.2" fill="#cfcfcf"/><rect x="8.9" y="3.75" width="6.35" height="7.35" fill="#cfcfcf"/><rect x="5.9" y="6.9" width="2.1" height="1.35" fill="#e4e4e4"/></svg><span class="lbl" style="left:115px"><span class="tx n">System.Core</span> <span class="tk"><span class="at">@</span>23000004</span></span></div>
<div class="row" style="top:596px"><svg class="ex" style="left:81px;top:0" width="8" height="14" viewBox="0 0 8 14"><path d="M1 1.6 L1 12.4 L6.4 7 Z M2 4 L2 10 L5 7 Z" fill="#f1f1f1" fill-rule="evenodd"/></svg><svg class="ic" style="left:92px" width="17" height="17" viewBox="0 0 17 17"><rect x="0.3" y="4.3" width="5.4" height="6.4" fill="#111" opacity=".6"/><rect x="8.3" y="3.15" width="7.55" height="8.55" fill="#111" opacity=".6"/><rect x="0.9" y="4.9" width="4.2" height="5.2" fill="#cfcfcf"/><rect x="8.9" y="3.75" width="6.35" height="7.35" fill="#cfcfcf"/><rect x="5.9" y="6.9" width="2.1" height="1.35" fill="#e4e4e4"/></svg><span class="lbl" style="left:115px"><span class="tx n">UnityEngine</span> <span class="tk"><span class="at">@</span>23000005</span></span></div>
<div class="row" style="top:613px"><svg class="ex" style="left:59px;top:0" width="9" height="12" viewBox="0 0 9 12"><path d="M8.1 2.3 L8.1 10.25 L0.5 10.25 Z" fill="#f4f4f4"/></svg><svg class="ic" style="left:73px" width="17" height="17" viewBox="0 0 17 17"><rect x="0.3" y="4.3" width="5.4" height="6.4" fill="#111" opacity=".6"/><rect x="8.3" y="3.15" width="7.55" height="8.55" fill="#111" opacity=".6"/><rect x="0.9" y="4.9" width="4.2" height="5.2" fill="#cfcfcf"/><rect x="8.9" y="3.75" width="6.35" height="7.35" fill="#cfcfcf"/><rect x="5.9" y="6.9" width="2.1" height="1.35" fill="#e4e4e4"/></svg><span class="lbl" style="left:96px"><span class="tx l">Assembly-UnityScript-firstpass</span> <span class="tk"><span class="at">@</span>23000006</span></span></div>
<div class="row" style="top:630px"><svg class="ex" style="left:81px;top:0" width="8" height="14" viewBox="0 0 8 14"><path d="M1 1.6 L1 12.4 L6.4 7 Z M2 4 L2 10 L5 7 Z" fill="#f1f1f1" fill-rule="evenodd"/></svg><svg class="ic" style="left:92px" width="17" height="17" viewBox="0 0 17 17"><rect x="0.3" y="4.3" width="5.4" height="6.4" fill="#111" opacity=".6"/><rect x="8.3" y="3.15" width="7.55" height="8.55" fill="#111" opacity=".6"/><rect x="0.9" y="4.9" width="4.2" height="5.2" fill="#cfcfcf"/><rect x="8.9" y="3.75" width="6.35" height="7.35" fill="#cfcfcf"/><rect x="5.9" y="6.9" width="2.1" height="1.35" fill="#e4e4e4"/></svg><span class="lbl" style="left:115px"><span class="tx n">Boo.Lang</span> <span class="tk"><span class="at">@</span>23000004</span></span></div>
<div class="row" style="top:647px"><svg class="ex" style="left:81px;top:0" width="8" height="14" viewBox="0 0 8 14"><path d="M1 1.6 L1 12.4 L6.4 7 Z M2 4 L2 10 L5 7 Z" fill="#f1f1f1" fill-rule="evenodd"/></svg><svg class="ic" style="left:92px" width="17" height="17" viewBox="0 0 17 17"><rect x="0.3" y="4.3" width="5.4" height="6.4" fill="#111" opacity=".6"/><rect x="8.3" y="3.15" width="7.55" height="8.55" fill="#111" opacity=".6"/><rect x="0.9" y="4.9" width="4.2" height="5.2" fill="#cfcfcf"/><rect x="8.9" y="3.75" width="6.35" height="7.35" fill="#cfcfcf"/><rect x="5.9" y="6.9" width="2.1" height="1.35" fill="#e4e4e4"/></svg><span class="lbl" style="left:115px"><span class="tx n" style="letter-spacing:.42px">mscorlib</span> <span class="tk"><span class="at">@</span>23000001</span></span></div>
<div class="row" style="top:664px"><svg class="ex" style="left:81px;top:0" width="8" height="14" viewBox="0 0 8 14"><path d="M1 1.6 L1 12.4 L6.4 7 Z M2 4 L2 10 L5 7 Z" fill="#f1f1f1" fill-rule="evenodd"/></svg><svg class="ic" style="left:92px" width="17" height="17" viewBox="0 0 17 17"><rect x="0.3" y="4.3" width="5.4" height="6.4" fill="#111" opacity=".6"/><rect x="8.3" y="3.15" width="7.55" height="8.55" fill="#111" opacity=".6"/><rect x="0.9" y="4.9" width="4.2" height="5.2" fill="#cfcfcf"/><rect x="8.9" y="3.75" width="6.35" height="7.35" fill="#cfcfcf"/><rect x="5.9" y="6.9" width="2.1" height="1.35" fill="#e4e4e4"/></svg><span class="lbl" style="left:115px"><span class="tx n">UnityEngine</span> <span class="tk"><span class="at">@</span>23000002</span></span></div>
<div class="row" style="top:681px"><svg class="ex" style="left:81px;top:0" width="8" height="14" viewBox="0 0 8 14"><path d="M1 1.6 L1 12.4 L6.4 7 Z M2 4 L2 10 L5 7 Z" fill="#f1f1f1" fill-rule="evenodd"/></svg><svg class="ic" style="left:92px" width="17" height="17" viewBox="0 0 17 17"><rect x="0.3" y="4.3" width="5.4" height="6.4" fill="#111" opacity=".6"/><rect x="8.3" y="3.15" width="7.55" height="8.55" fill="#111" opacity=".6"/><rect x="0.9" y="4.9" width="4.2" height="5.2" fill="#cfcfcf"/><rect x="8.9" y="3.75" width="6.35" height="7.35" fill="#cfcfcf"/><rect x="5.9" y="6.9" width="2.1" height="1.35" fill="#e4e4e4"/></svg><span class="lbl" style="left:115px"><span class="tx n">UnityScript.Lang</span> <span class="tk"><span class="at">@</span>23000003</span></span></div>
<div class="row" style="top:698px"><svg class="ex" style="left:62px;top:0" width="8" height="14" viewBox="0 0 8 14"><path d="M1 1.6 L1 12.4 L6.4 7 Z M2 4 L2 10 L5 7 Z" fill="#f1f1f1" fill-rule="evenodd"/></svg><svg class="ic" style="left:73px" width="17" height="17" viewBox="0 0 17 17"><rect x="0.3" y="4.3" width="5.4" height="6.4" fill="#111" opacity=".6"/><rect x="8.3" y="3.15" width="7.55" height="8.55" fill="#111" opacity=".6"/><rect x="0.9" y="4.9" width="4.2" height="5.2" fill="#cfcfcf"/><rect x="8.9" y="3.75" width="6.35" height="7.35" fill="#cfcfcf"/><rect x="5.9" y="6.9" width="2.1" height="1.35" fill="#e4e4e4"/></svg><span class="lbl" style="left:96px"><span class="tx n" style="letter-spacing:0">DataLib</span> <span class="tk"><span class="at">@</span>23000005</span></span></div>
<div class="row" style="top:715px"><svg class="ex" style="left:59px;top:0" width="9" height="12" viewBox="0 0 9 12"><path d="M8.1 2.3 L8.1 10.25 L0.5 10.25 Z" fill="#f4f4f4"/></svg><svg class="ic" style="left:73px" width="17" height="17" viewBox="0 0 17 17"><rect x="0.3" y="4.3" width="5.4" height="6.4" fill="#111" opacity=".6"/><rect x="8.3" y="3.15" width="7.55" height="8.55" fill="#111" opacity=".6"/><rect x="0.9" y="4.9" width="4.2" height="5.2" fill="#cfcfcf"/><rect x="8.9" y="3.75" width="6.35" height="7.35" fill="#cfcfcf"/><rect x="5.9" y="6.9" width="2.1" height="1.35" fill="#e4e4e4"/></svg><span class="lbl" style="left:96px"><span class="tx n" style="letter-spacing:.45px">Debuger</span> <span class="tk"><span class="at">@</span>23000009</span></span></div>
<div class="row" style="top:732px"><svg class="ex" style="left:81px;top:0" width="8" height="14" viewBox="0 0 8 14"><path d="M1 1.6 L1 12.4 L6.4 7 Z M2 4 L2 10 L5 7 Z" fill="#f1f1f1" fill-rule="evenodd"/></svg><svg class="ic" style="left:92px" width="17" height="17" viewBox="0 0 17 17"><rect x="0.3" y="4.3" width="5.4" height="6.4" fill="#111" opacity=".6"/><rect x="8.3" y="3.15" width="7.55" height="8.55" fill="#111" opacity=".6"/><rect x="0.9" y="4.9" width="4.2" height="5.2" fill="#cfcfcf"/><rect x="8.9" y="3.75" width="6.35" height="7.35" fill="#cfcfcf"/><rect x="5.9" y="6.9" width="2.1" height="1.35" fill="#e4e4e4"/></svg><span class="lbl" style="left:115px"><span class="tx n" style="letter-spacing:.42px">mscorlib</span> <span class="tk"><span class="at">@</span>23000001</span></span></div>
</div>
<!-- tree v scrollbar -->
<div class="sb" style="left:238px;top:85px;width:17px;height:769px"></div>
<svg style="left:242px;top:91px" width="9" height="5" viewBox="0 0 9 5"><path d="M0 5 H9 L4.5 0 Z" fill="#999"/></svg>
<svg style="left:242px;top:825px" width="9" height="5" viewBox="0 0 9 5"><path d="M0 0 H9 L4.5 5 Z" fill="#999"/></svg>
<div class="th" style="left:242px;top:379px;width:9px;height:8px"></div>
<!-- tree h scrollbar -->
<div class="sb" style="left:7px;top:836px;width:231px;height:18px"></div>
<svg style="left:13px;top:840px" width="5" height="9" viewBox="0 0 5 9"><path d="M5 0 V9 L0 4.5 Z" fill="#999"/></svg>
<svg style="left:227px;top:840px" width="5" height="9" viewBox="0 0 5 9"><path d="M0 0 V9 L5 4.5 Z" fill="#999"/></svg>
<div class="th" style="left:24px;top:840px;width:130px;height:9px"></div>

<!-- document tab -->
<div id="tab"><span class="t l" style="letter-spacing:.29px">Assembly-CSharp-firstpass</span>
<svg style="left:170px;top:7px" width="9" height="9" viewBox="0 0 9 9"><path d="M0.5 0.5 L8.5 8.5 M8.5 0.5 L0.5 8.5" stroke="#8a8a8e" stroke-width="1.2" fill="none"/></svg>
</div>
<div id="tabline"></div>
<div id="editor"></div>
<div id="gutter"></div>
<div id="curline"></div>
<div class="code" style="left:307px;top:87px;line-height:14px;color:#2b91af">1</div>
<div class="code" style="left:307px;top:101px;line-height:14px;color:#2b91af">2</div>
<div class="code" style="left:332px;top:87px;line-height:14px;color:#57a64a">// Assembly-CSharp-firstpass, Version=0.0.0.0, Culture=neutral, PublicKeyToken=null</div>
<!-- editor v scrollbar -->
<div class="sb" style="left:1577px;top:86px;width:17px;height:768px"></div>
<svg style="left:1581px;top:92px" width="9" height="5" viewBox="0 0 9 5"><path d="M0 5 H9 L4.5 0 Z" fill="#999"/></svg>
<svg style="left:1581px;top:826px" width="9" height="5" viewBox="0 0 9 5"><path d="M0 0 H9 L4.5 5 Z" fill="#999"/></svg>
<div class="th" style="left:1581px;top:103px;width:9px;height:702px"></div>
<!-- editor bottom -->
<div id="ebottom"></div>
<div id="zoom"></div>
<div class="abs" style="left:309px;top:838px;width:12px;height:15px;background:#1e1e1e;border-left:1px solid #434346"></div>
<div class="abs" style="left:267px;top:838px;line-height:16px;font-size:11px">100 %</div>
<svg style="left:313px;top:845px" width="6" height="3" viewBox="0 0 6 3"><path d="M0 0 H6 L3 3 Z" fill="#c8c8c8"/></svg>
<svg style="left:328px;top:841px" width="5" height="9" viewBox="0 0 5 9"><path d="M5 0 V9 L0 4.5 Z" fill="#555558"/></svg>

<!-- tooltip -->
<div id="tip">
<div style="top:5px;font-size:11.8px"><span style="color:#569cd6">class</span> <span style="color:#ffd700">CS</span>.<span class="c" style="color:#4ec9b0">领取等级解锁奖励</span></div>
<div class="l" style="top:22px">DataLib, <span style="color:#2b9a9a">Version</span>=1.0.0.0, <span style="color:#2b9a9a">Culture</span>=<span style="color:#d670d6">neutral</span>, <span style="color:#2b9a9a">PublicKeyToken</span>=<span style="color:#569cd6">null</span></div>
</div>

<!-- taskbar -->
<div id="taskbar">
<div class="abs" style="left:100px;top:0;width:48px;height:40px;background:#343332"></div>
<div class="ul" style="left:55px;width:40px"></div>
<div class="ul" style="left:100px;width:48px"></div>
<div class="ul" style="left:153px;width:40px"></div>
<!-- windows logo -->
<svg style="left:16px;top:12px" width="17" height="17" viewBox="0 0 17 17"><path d="M0 2.4 L7 1.4 V8 H0 Z M8 1.25 L17 0 V8 H8 Z M0 9 H7 V15.6 L0 14.6 Z M8 9 H17 V17 L8 15.75 Z" fill="#fff"/></svg>
<!-- explorer + dnSpy icons (taskbar-relative coords) -->
<svg style="left:0;top:0" width="200" height="40" viewBox="0 0 200 40">
<path d="M64 11 H72.6 L73.6 12 H85.6 V28 H64 Z" fill="#ffd767"/>
<path d="M64 24 H85.6 V28 H64 Z" fill="#f9cd52"/>
<path d="M64 11 H72.6 L73.6 12 L72.4 13.9 H64 Z" fill="#e8a50e"/>
<path d="M68.1 21.6 Q68.1 20.75 69 20.75 H81 Q81.9 20.75 81.9 21.6 V28.9 H77.8 V24.5 H71.9 V28.9 H68.1 Z" fill="#3b9be8"/>
<rect x="120.3" y="8.2" width="15.7" height="14.5" fill="#343332" stroke="#fff" stroke-width="1.3"/>
<rect x="117.2" y="11.4" width="15.6" height="14.4" fill="#343332" stroke="#fff" stroke-width="1.3"/>
<rect x="113.9" y="14.4" width="15.6" height="15.8" fill="#3b3b3b" stroke="#fff" stroke-width="1.7"/>
<rect x="117.8" y="17.6" width="8.1" height="8.4" fill="#ededed"/>
</svg>
<!-- chrome -->
<svg style="left:161px;top:8px" width="24" height="24" viewBox="0 0 24 24"><circle cx="12" cy="12" r="11" fill="#fbc116"/><path d="M12 12 L7.15 14.8 L2.3 6.4 A11.2 11.2 0 0 1 21.7 6.4 L12 6.4 Z" fill="#e84233"/><path d="M12 12 L12 6.4 L21.7 6.4 A11.2 11.2 0 0 1 12 23.2 L16.85 14.8 Z" fill="#fcc31e"/><path d="M12 12 L16.85 14.8 L12 23.2 A11.2 11.2 0 0 1 2.3 6.4 L7.15 14.8 Z" fill="#2a9f49"/><circle cx="12" cy="12" r="5.2" fill="#fff"/><circle cx="12" cy="12" r="4.15" fill="#327fea"/></svg>
<!-- tray -->
<svg style="left:1374px;top:16px" width="13" height="8" viewBox="0 0 13 8"><path d="M0.5 7 L6.5 1 L12.5 7" fill="none" stroke="#fff" stroke-width="1.1"/></svg>
<svg style="left:1396px;top:13px" width="17" height="13" viewBox="0 0 17 13"><rect x="4.6" y="3.6" width="10.8" height="6.8" fill="none" stroke="#fff" stroke-width="1.1"/><rect x="16" y="5.5" width="1" height="3" fill="#fff"/><rect x="6" y="5" width="8" height="4" fill="#fff"/><path d="M1 0 V2.5 M4 0 V2.5 M0 2.8 H5 V4.5 Q5 6.5 2.5 6.5 Q0 6.5 0 4.5 Z M2.5 6.5 V10.5 H5" fill="none" stroke="#fff" stroke-width="1"/></svg>
<svg style="left:1423px;top:15px" width="13" height="13" viewBox="0 0 13 13"><circle cx="11" cy="11" r="1.4" fill="#fff"/><path d="M6.5 12 A4.5 4.5 0 0 1 11 7.5" fill="none" stroke="#fff" stroke-width="1.2"/><path d="M3.3 12 A7.7 7.7 0 0 1 11 4.3 M0.3 12 A10.7 10.7 0 0 1 11 1.3" fill="none" stroke="#8c8c8c" stroke-width="1"/></svg>
<svg style="left:1444px;top:12px" width="18" height="15" viewBox="0 0 18 15"><path d="M0.5 5 H3.5 L7.5 1.2 V13.8 L3.5 10 H0.5 Z" fill="none" stroke="#fff" stroke-width="1"/><path d="M9.5 5.2 Q11 7.5 9.5 9.8" fill="none" stroke="#fff" stroke-width="1"/><path d="M11.5 3 Q14.5 7.5 11.5 12 M13.8 1 Q18 7.5 13.8 14" fill="none" stroke="#aaa" stroke-width="0.9"/></svg>
<div class="tray" style="left:1468px;top:12px;font-size:14px;line-height:18px;font-weight:500">中</div>
<div class="abs" style="left:1497px;top:14px;width:14px;height:13px;background:#fff"></div>
<div class="tray" style="left:1498px;top:12px;font-size:12px;line-height:17px;color:#000;font-weight:500">拼</div>
<div class="tray" style="left:1543px;top:3px;font-size:12.5px;letter-spacing:.25px;line-height:16px">15:24</div>
<div class="tray" style="left:1532px;top:21px;font-size:12.5px;letter-spacing:.25px;line-height:16px">2022/6/5</div>
<div class="abs" style="left:1595px;top:0;width:1px;height:40px;background:#6b6b6b"></div>
</div>
<div id="wm">酒八论坛</div>
</body>
</html>
